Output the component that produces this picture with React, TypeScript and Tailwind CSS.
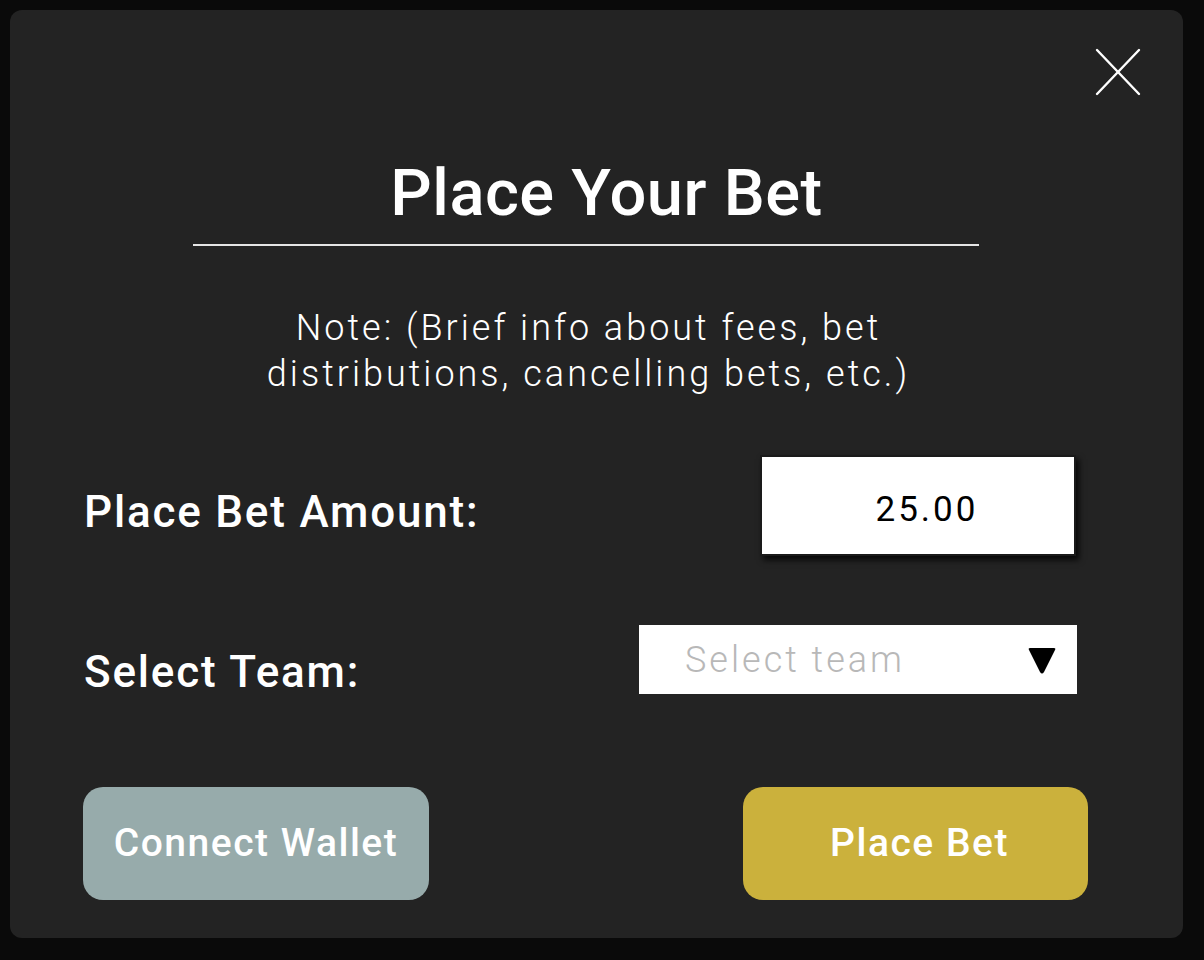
const font = { fontFamily: "Roboto, 'Noto Sans', sans-serif" };

export default function App() {
  return (
    <div className="min-h-screen w-full bg-[#0a0a0a] pt-[10px] pl-[10px]" style={font}>
      <div className="flex h-[928px] w-[1173px] flex-col rounded-[12px] bg-[#232323] text-white">
        <div className="flex justify-end pr-[42px] pt-[38px]">
          <svg width="46" height="48" viewBox="0 0 46 48" stroke="#fff" strokeWidth="2.4" strokeLinecap="round">
            <line x1="2" y1="2" x2="44" y2="46" />
            <line x1="44" y1="2" x2="2" y2="46" />
          </svg>
        </div>

        <div className="mt-[57px] flex flex-col">
          <h1 className="pl-[20px] text-center text-[65px] font-medium leading-[80px] tracking-[0.5px]">Place Your Bet</h1>
          <div className="ml-[183px] mt-[11px] h-[2px] w-[786px] bg-[#e5e5e5]" />
          <p className="mt-[59px] pr-[16px] text-center text-[36px] font-light leading-[46px] tracking-[3px]">
            Note: (Brief info about fees, bet
            <br />
            distributions, cancelling bets, etc.)
          </p>
        </div>

        <div className="mt-[58px] flex items-start justify-between pl-[74px] pr-[107px]">
          <span className="mt-[31px] text-[44px] font-medium leading-[52px] tracking-[1.8px]">Place Bet Amount:</span>
          <div className="flex h-[101px] w-[316px] items-center justify-center border-2 border-[#1a1a1a] bg-white pl-[18px] pt-[10px] text-[35px] tracking-[3px] text-black shadow-[3px_4px_6px_rgba(0,0,0,0.8)]">
            25.00
          </div>
        </div>

        <div className="mt-[69px] flex items-start justify-between pl-[74px] pr-[106px]">
          <span className="mt-[21px] text-[44px] font-medium leading-[52px] tracking-[1.8px]">Select Team:</span>
          <div className="flex h-[69px] w-[438px] items-center justify-between bg-white pl-[46px] pr-[20px]">
            <span className="text-[36px] font-light tracking-[3px] text-[#b8b8b8]">Select team</span>
            <svg width="30" height="30" viewBox="0 0 30 30">
              <path d="M3 3 H27 Q29 3 28 5 L17 27 Q15 30 13 27 L2 5 Q1 3 3 3 Z" fill="#000" />
            </svg>
          </div>
        </div>

        <div className="mt-[89px] flex justify-between pl-[73px] pr-[95px]">
          <button className="h-[113px] w-[346px] rounded-[20px] bg-[#97abab] text-[39px] font-medium tracking-[1.5px] text-white">
            Connect Wallet
          </button>
          <button className="h-[113px] w-[345px] rounded-[20px] bg-[#cbb13c] pl-[8px] text-[39px] font-medium tracking-[1.5px] text-white">
            Place Bet
          </button>
        </div>
      </div>
    </div>
  );
}
